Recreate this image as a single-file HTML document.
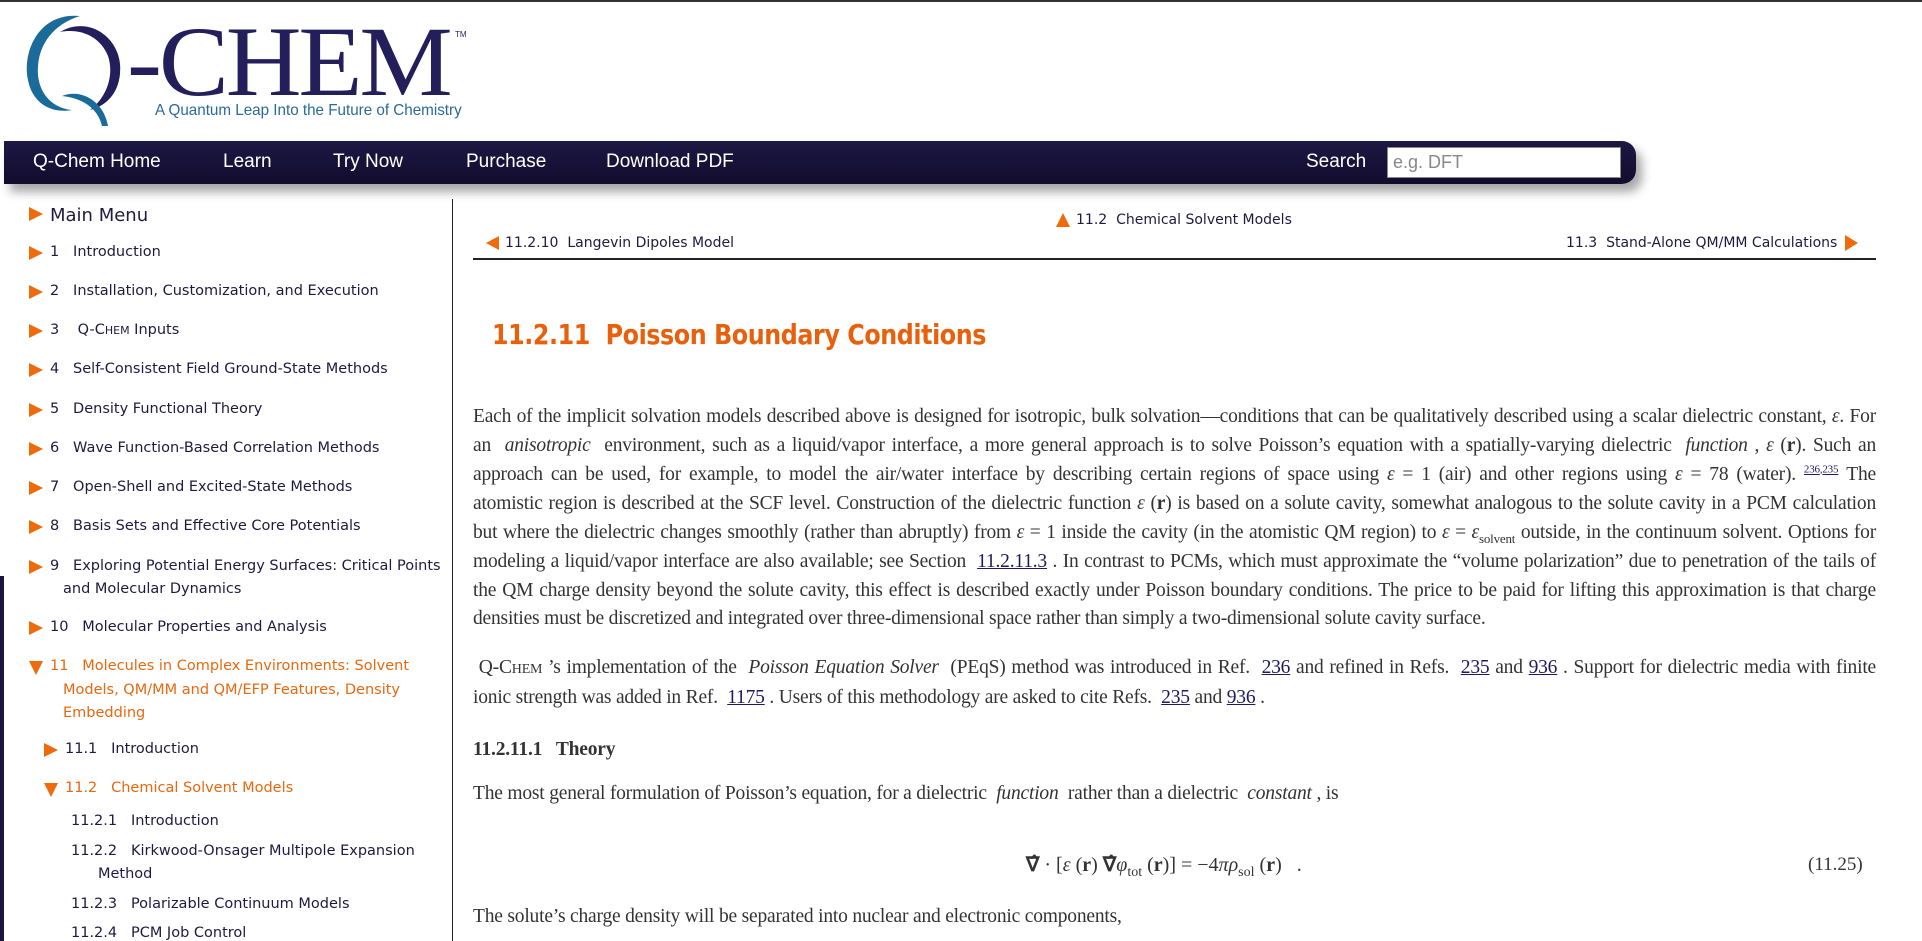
<!DOCTYPE html>
<html><head><meta charset="utf-8"><style>
*{margin:0;padding:0;box-sizing:border-box}
body{width:1922px;height:941px;overflow:hidden;background:#fff;position:relative;font-family:"DejaVu Sans","Liberation Sans",sans-serif;color:#1f1a40}
.a{position:absolute;white-space:nowrap}
#top{position:absolute;left:0;top:0;width:1922px;height:2px;background:#333}
#nav{position:absolute;left:4px;top:141px;width:1632px;height:43px;background:linear-gradient(#1d1845,#120c2c);border-radius:0 14px 14px 0;box-shadow:6px 8px 10px rgba(0,0,0,.35)}
#nav span{position:absolute;top:10px;color:#fff;font-size:19px;font-family:"Liberation Sans",sans-serif}
#srch{position:absolute;left:1383px;top:6px;width:234px;height:31px;background:#fff;border:1px solid #888;color:#888;font-size:18px;font-family:"Liberation Sans",sans-serif;padding:4px 5px}
.sb{font-size:14.5px;color:#1f1a40}
.or{color:#e8680e}
.tri{display:inline-block;width:0;height:0;border-top:7px solid transparent;border-bottom:7px solid transparent;border-left:14px solid #ee6a0a;position:absolute}
.trd{display:inline-block;width:0;height:0;border-left:7px solid transparent;border-right:7px solid transparent;border-top:14px solid #ee6a0a;position:absolute}
.p{position:absolute;left:473px;width:1403px;font-family:"Liberation Serif",serif;font-size:19.5px;color:#333;white-space:nowrap;text-align:justify;text-align-last:justify;height:24px;line-height:24px;letter-spacing:-0.2px}
.p.l{text-align-last:left}
.p a{color:#1f1a60;text-decoration:underline}
sup,sub{line-height:0}
</style></head><body>
<div id="top"></div>
<svg class="a" style="left:20px;top:10px" width="110" height="118" viewBox="0 0 110 118">
<path d="M60 6 C20 2 2 40 8 70 C12 92 30 104 52 100 C30 98 16 80 18 56 C20 28 40 12 60 6Z" fill="#1a6a9a"/>
<path d="M40 22 C70 4 104 30 100 64 C98 84 86 96 70 100 C88 86 94 64 88 46 C80 26 60 18 40 22Z" fill="#231f5a"/>
<path d="M42 86 C62 78 84 92 88 116 L82 116 C78 98 62 88 42 86Z" fill="#1a6a9a"/>
</svg>
<div class="a" style="left:127px;top:12px;font-family:'Liberation Serif',serif;font-size:100px;line-height:100px;color:#231f5a;transform:scaleX(1.05);transform-origin:left top;letter-spacing:-3px">-CHEM</div>
<div class="a" style="left:455px;top:30px;font-size:8px;color:#231f5a;font-family:'Liberation Sans',sans-serif">TM</div>
<div class="a" style="left:155px;top:102px;font-family:'Liberation Sans',sans-serif;font-size:16px;color:#2a6a9a;transform:scaleX(0.95);transform-origin:left top">A Quantum Leap Into the Future of Chemistry</div>
<div id="nav">
<span style="left:29px">Q-Chem Home</span><span style="left:219px">Learn</span><span style="left:329px">Try Now</span><span style="left:462px">Purchase</span><span style="left:602px">Download PDF</span><span style="left:1302px">Search</span>
<div id="srch">e.g. DFT</div>
</div>
<div class="a" style="left:452px;top:199px;width:1px;height:742px;background:#222"></div>
<div class="a" style="left:0;top:576px;width:4px;height:365px;background:#1b1640"></div>
<div class="sb">
<i class="tri" style="left:29px;top:207px"></i><div class="a" style="left:50px;top:205px;font-size:18px">Main Menu</div>
<i class="tri" style="left:29px;top:246px"></i><div class="a" style="left:50px;top:244px">1&nbsp;&nbsp;&nbsp;Introduction</div>
<i class="tri" style="left:29px;top:285px"></i><div class="a" style="left:50px;top:283px">2&nbsp;&nbsp;&nbsp;Installation, Customization, and Execution</div>
<i class="tri" style="left:29px;top:324px"></i><div class="a" style="left:50px;top:322px">3&nbsp;&nbsp;&nbsp;&nbsp;Q-C<span style="font-size:11px">HEM</span>&nbsp;Inputs</div>
<i class="tri" style="left:29px;top:363px"></i><div class="a" style="left:50px;top:361px">4&nbsp;&nbsp;&nbsp;Self-Consistent Field Ground-State Methods</div>
<i class="tri" style="left:29px;top:403px"></i><div class="a" style="left:50px;top:401px">5&nbsp;&nbsp;&nbsp;Density Functional Theory</div>
<i class="tri" style="left:29px;top:442px"></i><div class="a" style="left:50px;top:440px">6&nbsp;&nbsp;&nbsp;Wave Function-Based Correlation Methods</div>
<i class="tri" style="left:29px;top:481px"></i><div class="a" style="left:50px;top:479px">7&nbsp;&nbsp;&nbsp;Open-Shell and Excited-State Methods</div>
<i class="tri" style="left:29px;top:520px"></i><div class="a" style="left:50px;top:518px">8&nbsp;&nbsp;&nbsp;Basis Sets and Effective Core Potentials</div>
<i class="tri" style="left:29px;top:560px"></i><div class="a" style="left:50px;top:558px">9&nbsp;&nbsp;&nbsp;Exploring Potential Energy Surfaces: Critical Points</div>
<div class="a" style="left:63px;top:581px">and Molecular Dynamics</div>
<i class="tri" style="left:29px;top:621px"></i><div class="a" style="left:50px;top:619px">10&nbsp;&nbsp;&nbsp;Molecular Properties and Analysis</div>
<i class="trd" style="left:29px;top:661px"></i><div class="a or" style="left:50px;top:658px">11&nbsp;&nbsp;&nbsp;Molecules in Complex Environments: Solvent</div>
<div class="a or" style="left:63px;top:682px">Models, QM/MM and QM/EFP Features, Density</div>
<div class="a or" style="left:63px;top:705px">Embedding</div>
<i class="tri" style="left:44px;top:743px"></i><div class="a" style="left:65px;top:741px">11.1&nbsp;&nbsp;&nbsp;Introduction</div>
<i class="trd" style="left:44px;top:783px"></i><div class="a or" style="left:65px;top:780px">11.2&nbsp;&nbsp;&nbsp;Chemical Solvent Models</div>
<div class="a" style="left:71px;top:813px">11.2.1&nbsp;&nbsp;&nbsp;Introduction</div>
<div class="a" style="left:71px;top:843px">11.2.2&nbsp;&nbsp;&nbsp;Kirkwood-Onsager Multipole Expansion</div>
<div class="a" style="left:98px;top:866px">Method</div>
<div class="a" style="left:71px;top:896px">11.2.3&nbsp;&nbsp;&nbsp;Polarizable Continuum Models</div>
<div class="a" style="left:71px;top:925px">11.2.4&nbsp;&nbsp;&nbsp;PCM Job Control</div>
</div>
<i class="a" style="left:1056px;top:213px;width:0;height:0;border-left:7px solid transparent;border-right:7px solid transparent;border-bottom:14px solid #ee6a0a"></i>
<div class="a sb" style="left:1076px;top:212px;font-size:14px">11.2&nbsp;&nbsp;Chemical Solvent Models</div>
<i class="a" style="left:486px;top:236px;width:0;height:0;border-top:7px solid transparent;border-bottom:7px solid transparent;border-right:13px solid #ee6a0a"></i>
<div class="a sb" style="left:505px;top:235px;font-size:14px">11.2.10&nbsp;&nbsp;Langevin Dipoles Model</div>
<div class="a sb" style="left:1566px;top:235px;font-size:14px">11.3&nbsp;&nbsp;Stand-Alone QM/MM Calculations</div>
<i class="a" style="left:1845px;top:235px;width:0;height:0;border-top:8px solid transparent;border-bottom:8px solid transparent;border-left:13px solid #ee6a0a"></i>
<div class="a" style="left:473px;top:258px;width:1403px;height:2px;background:#222"></div>
<div class="a" style="left:492px;top:318px;font-size:28px;color:#e8600c;font-weight:bold;font-family:'DejaVu Sans',sans-serif;letter-spacing:-0.5px;transform:scaleX(0.85);transform-origin:left top">11.2.11&nbsp;&nbsp;Poisson Boundary Conditions</div>
<div class="p" style="top:405px">Each of the implicit solvation models described above is designed for isotropic, bulk solvation—conditions that can be qualitatively described using a scalar dielectric constant, <i>ε</i>. For</div>
<div class="p" style="top:434px">an &nbsp;<i>anisotropic</i>&nbsp; environment, such as a liquid/vapor interface, a more general approach is to solve Poisson’s equation with a spatially-varying dielectric &nbsp;<i>function</i>&nbsp;, <i>ε</i> (<b>r</b>). Such an</div>
<div class="p" style="top:463px">approach can be used, for example, to model the air/water interface by describing certain regions of space using <i>ε</i> = 1 (air) and other regions using <i>ε</i> = 78 (water). <sup style="font-size:11px"><a>236</a>,<a>235</a></sup> The</div>
<div class="p" style="top:492px">atomistic region is described at the SCF level. Construction of the dielectric function <i>ε</i> (<b>r</b>) is based on a solute cavity, somewhat analogous to the solute cavity in a PCM calculation</div>
<div class="p" style="top:521px">but where the dielectric changes smoothly (rather than abruptly) from <i>ε</i> = 1 inside the cavity (in the atomistic QM region) to <i>ε</i> = <i>ε</i><sub style="font-size:13px">solvent</sub> outside, in the continuum solvent. Options for</div>
<div class="p" style="top:550px">modeling a liquid/vapor interface are also available; see Section &nbsp;<a>11.2.11.3</a>&nbsp;. In contrast to PCMs, which must approximate the “volume polarization” due to penetration of the tails of</div>
<div class="p" style="top:579px">the QM charge density beyond the solute cavity, this effect is described exactly under Poisson boundary conditions. The price to be paid for lifting this approximation is that charge</div>
<div class="p l" style="top:607px">densities must be discretized and integrated over three-dimensional space rather than simply a two-dimensional solute cavity surface.</div>
<div class="p" style="top:656px">&nbsp;Q-C<span style="font-size:14px">HEM</span>&nbsp;’s implementation of the &nbsp;<i>Poisson Equation Solver</i>&nbsp; (PEqS) method was introduced in Ref. &nbsp;<a>236</a>&nbsp;and refined in Refs. &nbsp;<a>235</a>&nbsp;and <a>936</a>&nbsp;. Support for dielectric media with finite</div>
<div class="p l" style="top:686px">ionic strength was added in Ref. &nbsp;<a>1175</a>&nbsp;. Users of this methodology are asked to cite Refs. &nbsp;<a>235</a>&nbsp;and <a>936</a>&nbsp;.</div>
<div class="p l" style="top:738px;font-weight:bold">11.2.11.1&nbsp;&nbsp; Theory</div>
<div class="p l" style="top:782px">The most general formulation of Poisson’s equation, for a dielectric &nbsp;<i>function</i>&nbsp; rather than a dielectric &nbsp;<i>constant</i>&nbsp;, is</div>
<div class="a" style="left:1026px;top:852px;font-family:'Liberation Serif',serif;font-size:20px;color:#333"><b>∇̂</b> · [<i>ε</i> (<b>r</b>) <b>∇̂</b><i>φ</i><sub style="font-size:14px">tot</sub> (<b>r</b>)] = −4<i>πρ</i><sub style="font-size:14px">sol</sub> (<b>r</b>) &nbsp;&nbsp;.</div>
<div class="a" style="left:1808px;top:854px;font-family:'Liberation Serif',serif;font-size:19px;color:#333">(11.25)</div>
<div class="p l" style="top:905px">The solute’s charge density will be separated into nuclear and electronic components,</div>
</body></html>
